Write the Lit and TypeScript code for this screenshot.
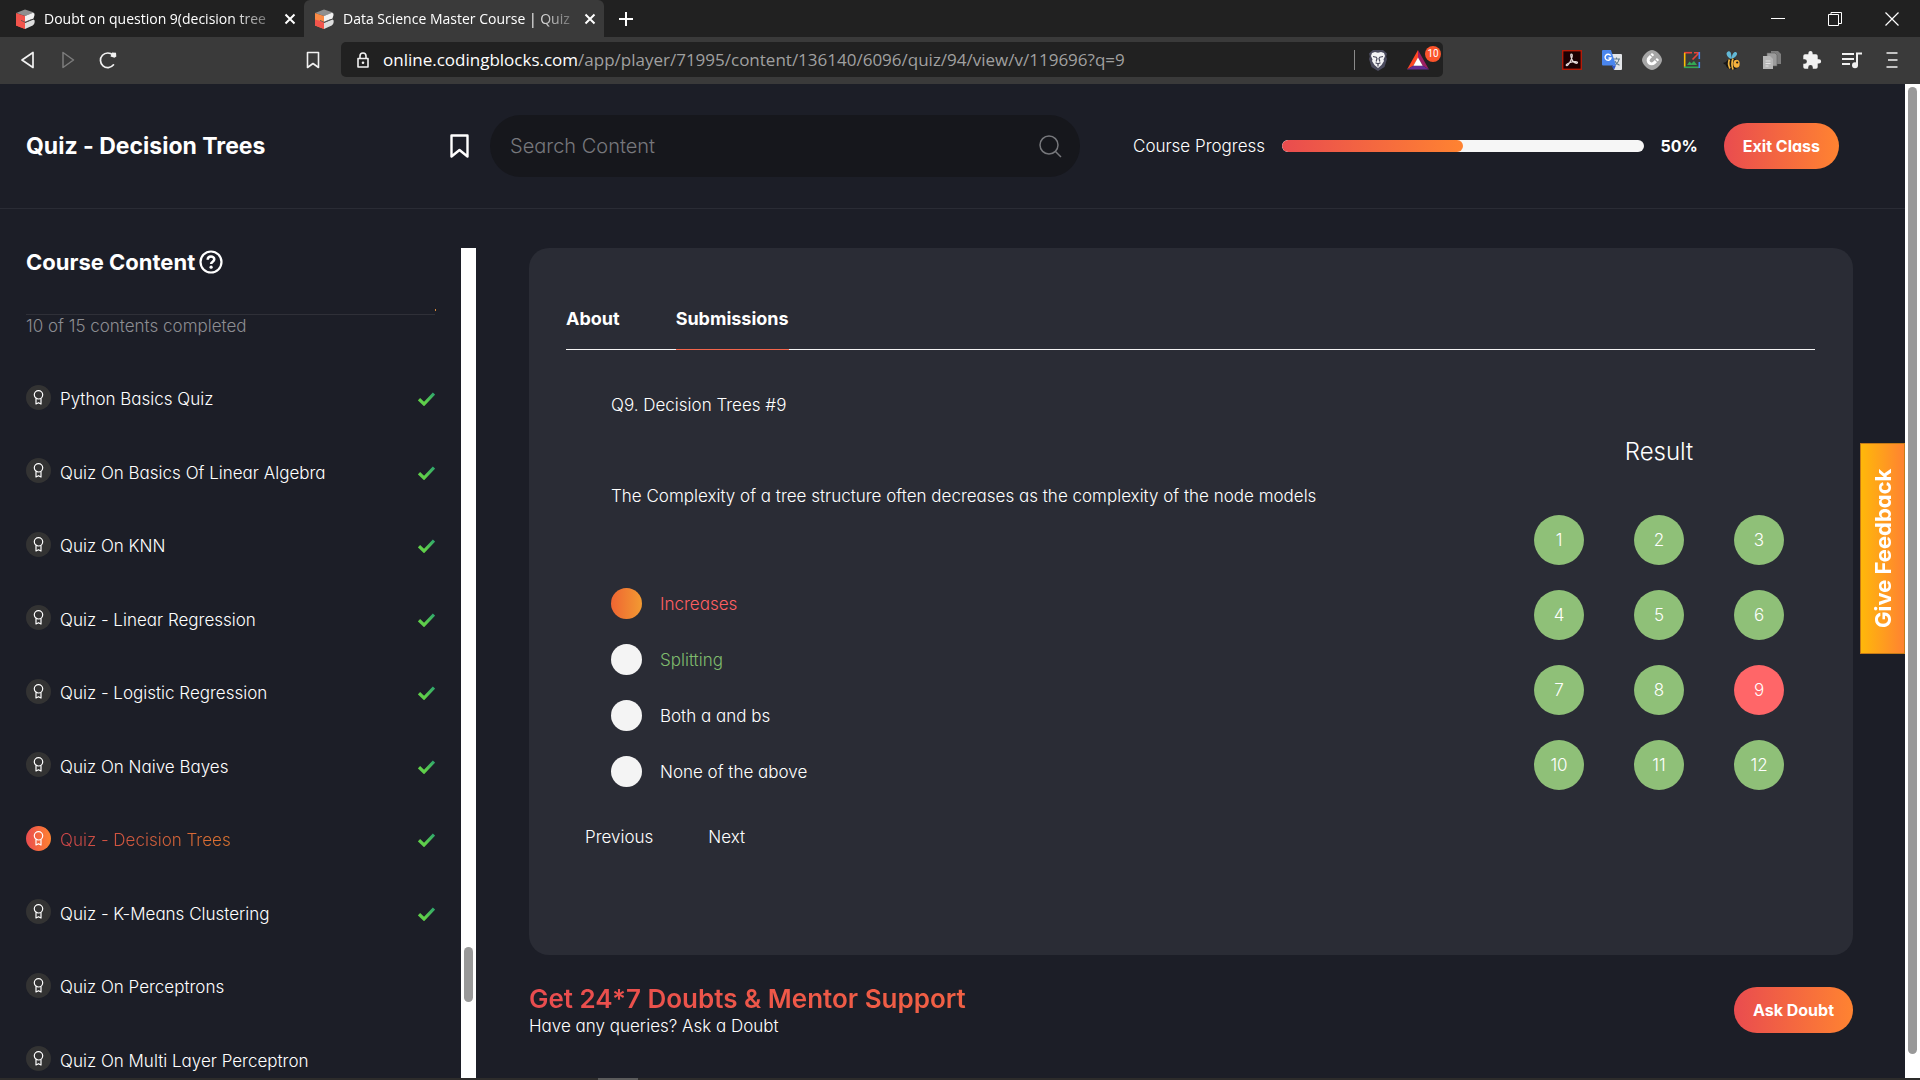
import { LitElement, html, css, svg, nothing } from "lit";
import { customElement, state } from "lit/decorators.js";
import { classMap } from "lit/directives/class-map.js";

interface Lesson {
  title: string;
  done: boolean;
  active?: boolean;
}

const LESSONS: Lesson[] = [
  { title: "Python Basics Quiz", done: true },
  { title: "Quiz On Basics Of Linear Algebra", done: true },
  { title: "Quiz On KNN", done: true },
  { title: "Quiz - Linear Regression", done: true },
  { title: "Quiz - Logistic Regression", done: true },
  { title: "Quiz On Naive Bayes", done: true },
  { title: "Quiz - Decision Trees", done: true, active: true },
  { title: "Quiz - K-Means Clustering", done: true },
  { title: "Quiz On Perceptrons", done: false },
  { title: "Quiz On Multi Layer Perceptron", done: false },
];

const OPTIONS = [
  { text: "Increases", tone: "wrong" },
  { text: "Splitting", tone: "right" },
  { text: "Both a and bs", tone: "" },
  { text: "None of the above", tone: "" },
];

const blocksLogo = (front: string) => html`<svg width="22" height="22" viewBox="0 0 22 22" aria-hidden="true">
  <path d="M2 5 11 1.5 20 4.5 11 8z" fill="#8f8f8f" />
  <path d="M2 5 11 8v13L2 17.5z" fill=${front} />
  <path d="M2 11.5 11 14v7L2 17.5z" fill="#f2544c" />
  <path d="M11 8l8-3.3q2 .3 1.5 2.6L19.500 10.500 11 14z" fill="#f1f1f1" />
  <path d="M11 15l8.500-3.600q1.500.4 1.200 2.600-.2 2.500-2 3.400L11 21z" fill="#dcdcdc" />
  <path d="M7 12.300 11 14.300 18 11.300" fill="none" stroke="#555" stroke-width="0.800" />
</svg>`;

const closeIcon = html`<svg width="12" height="12" viewBox="0 0 12 12" aria-hidden="true">
  <path d="M1.500 1.500l9 9m0-9l-9 9" stroke="#fff" stroke-width="2" />
</svg>`;

@customElement("browser-chrome")
export class BrowserChrome extends LitElement {
  static styles = css`
    :host {
      display: block;
      font-family: "Open Sans", "Noto Sans", sans-serif;
      font-weight: 400;
      color: #fff;
      background: #3a3a3a;
    }
    button {
      border: 0;
      padding: 0;
      margin: 0;
      background: none;
      color: inherit;
      font: inherit;
      display: flex;
      align-items: center;
      justify-content: center;
    }
    svg {
      display: block;
      flex: none;
    }
    .tabs {
      display: flex;
      align-items: stretch;
      height: 37px;
      background: #212121;
    }
    .tab {
      display: flex;
      align-items: center;
      width: 304px;
      gap: 8px;
      padding: 0 4px 0 14px;
      box-sizing: border-box;
      font-size: 14px;
      line-height: 20px;
    }
    .tab.on {
      width: 300px;
      padding: 0 4px 0 9px;
      background: #3a3a3a;
      border-radius: 6px 6px 0 0;
    }
    .label {
      flex: 1;
      min-width: 0;
      white-space: nowrap;
      mask-image: linear-gradient(90deg, #000 calc(100% - 40px), #0004);
    }
    .tab button {
      width: 20px;
      height: 20px;
    }
    .plus {
      width: 44px;
    }
    .window {
      display: flex;
      margin-left: auto;
    }
    .window button {
      width: 57px;
    }
    .bar {
      display: flex;
      align-items: center;
      height: 47px;
      padding: 0 18px 2px 0;
      box-sizing: border-box;
    }
    .nav {
      display: flex;
      align-items: center;
      gap: 20px;
      width: 341px;
      padding: 0 18px;
      box-sizing: border-box;
    }
    .save {
      margin-left: auto;
    }
    .address {
      display: flex;
      align-items: center;
      flex: 1;
      min-width: 0;
      height: 35px;
      padding: 0 2px 0 14px;
      box-sizing: border-box;
      border-radius: 5px;
      background: #212121;
      font-size: 17px;
      line-height: 24px;
      gap: 12px;
    }
    .url {
      flex: 1;
      min-width: 0;
      overflow: hidden;
      white-space: nowrap;
      color: #a0a0a0;
    }
    .host {
      color: #fff;
    }
    .rule {
      width: 1px;
      height: 20px;
      background: #8a8a8a;
    }
    .rewards {
      position: relative;
      width: 40px;
      justify-content: flex-start;
      padding-left: 6px;
      box-sizing: border-box;
    }
    .badge {
      position: absolute;
      top: -4px;
      right: 0;
      width: 16px;
      height: 16px;
      border-radius: 8px;
      background: #fb542b;
      font-family: Roboto, sans-serif;
      font-size: 10px;
      line-height: 16px;
      text-align: center;
    }
    .extensions {
      display: flex;
      gap: 20px;
      margin-left: 119px;
    }
  `;

  private extensionIcons() {
    return [
      ["PDF tools", svg`<rect x="0.700" y="0.700" width="18.600" height="18.600" fill="#1b0002" stroke="#b51b08" stroke-width="1.400"/><path d="M9.300 4c1.800 0 .8 3.800-.4 6.300S6 15.700 4.800 15.700s-.6-1.900 2.700-3 8-1.500 8-.1-3 .6-4.600-1.500S8 4 9.300 4z" fill="none" stroke="#e6d9d9" stroke-width="1.200"/>`],
      ["Translate", svg`<path d="M8 4h11a1 1 0 0 1 1 1v14a1 1 0 0 1-1 1h-7z" fill="#e3e5e8"/><path d="M11 9h7M14.500 7.500V9M17 9c-.5 3-2 5-4.500 6M12.800 11c1 2 2.500 3.400 4.700 4.300" fill="none" stroke="#607988" stroke-width="1.100"/><path d="M1 0h8l5 15.500H1a1 1 0 0 1-1-1V1a1 1 0 0 1 1-1z" fill="#4a86ee"/><path d="M9.500 15.500H14L12 20z" fill="#2f56c8"/><path d="M8.600 5.600A3 3 0 1 0 9 8H6.500" fill="none" stroke="#fff" stroke-width="1.400"/>`],
      ["Clipper", svg`<path d="M10 0c4 0 10 6 10 10s-6 10-10 10S0 14 0 10 6 0 10 0z" fill="#a6a6a6"/><g transform="rotate(45 10 10)"><path d="M6.500 5v5.500a3.500 3.500 0 0 0 7 0V5" fill="none" stroke="#fff" stroke-width="3"/><path d="M4.500 7.500h4m3 0h4" stroke="#a6a6a6"/></g>`],
      ["Image search", svg`<path d="M10 2.700H2" stroke="#ea4335" stroke-width="1.600"/><path d="M2.700 3v14.500" stroke="#fbbc05" stroke-width="1.600"/><path d="M2 17.300h15.300" stroke="#34a853" stroke-width="1.600"/><path d="M17.300 18v-6" stroke="#4285f4" stroke-width="1.600"/><path d="M10.500 9.500 17 3M12 2.700h5" fill="none" stroke="#ea4335" stroke-width="1.600"/><path d="M17.300 2v7" stroke="#4285f4" stroke-width="1.600"/><path d="M5 15l2.500-3.500 2 2L12 11l3 4z" fill="#34a853"/>`],
      ["Bee", svg`<path d="M9 9C5 7 3 3 6 1.500S9.500 5 9.500 8.500C10 4 12.500 1 14.500 2.500S13 8 9.500 9z" fill="#62b8d6"/><ellipse cx="10.500" cy="14" rx="7" ry="5.500" fill="#161616"/><path d="M7.500 9.500Q5.500 13.500 8 18.500M11 8.600Q9 13.500 11 19.500" fill="none" stroke="#f0b440" stroke-width="1.700"/><ellipse cx="14.500" cy="13.700" rx="3.200" ry="4" fill="#f6b23c"/><circle cx="15.200" cy="12.500" r="1.100" fill="#161616"/><path d="M4 12l-3 1 2.500 2z" fill="#161616"/>`],
      ["Copy pages", svg`<path d="M9 1h7l3 3v10H9z" fill="#7e7e7e"/><path d="M5 3h8l2 2v11H5z" fill="#9c9c9c" stroke="#5f5f5f" stroke-width="0.600"/><path d="M1 6h7l3 3v10H1z" fill="#b5b5b5"/><path d="M3.500 11h5m-5 2.500h5M3.500 16h3" stroke="#e2e2e2"/>`],
      ["Extensions", svg`<path d="M17 9.300h-1.300V6a1.700 1.700 0 0 0-1.700-1.700h-3.400V3a2.100 2.100 0 0 0-4.200 0v1.300H3A1.700 1.700 0 0 0 1.300 6v3.200h1.300a2.300 2.300 0 0 1 0 4.600H1.300V17A1.700 1.700 0 0 0 3 18.700h3.200v-1.300a2.300 2.300 0 0 1 4.600 0v1.300H14a1.700 1.700 0 0 0 1.700-1.700v-3.400H17a2.100 2.100 0 0 0 0-4.300z" fill="#f1f1f1"/>`],
      ["Media", svg`<path d="M0 4h12M0 9h12M0 14h8" stroke="#f1f1f1" stroke-width="2"/><path d="M15 15V3.500h5" fill="none" stroke="#f1f1f1" stroke-width="2"/><circle cx="13" cy="15.200" r="3" fill="#f1f1f1"/>`],
      ["Menu", svg`<path d="M4.500 3h11M6 10h9.500M4.500 17h11" stroke="#f1f1f1" stroke-width="1.700"/>`],
    ] as const;
  }

  render() {
    return html`
      <div class="tabs">
        <div class="tab">
          ${blocksLogo("#f2544c")}
          <span class="label">Doubt on question 9(decision tree</span>
          <button aria-label="Close tab">${closeIcon}</button>
        </div>
        <div class="tab on">
          ${blocksLogo("#fb8a45")}
          <span class="label">Data Science Master Course | Quiz</span>
          <button aria-label="Close tab">${closeIcon}</button>
        </div>
        <button class="plus" aria-label="New tab">
          <svg width="16" height="16" viewBox="0 0 16 16"><path d="M8 1v14M1 8h14" stroke="#fff" stroke-width="2" /></svg>
        </button>
        <div class="window">
          <button aria-label="Minimize"><svg width="14" height="14" viewBox="0 0 14 14"><path d="M0 6.500h14" stroke="#fff" /></svg></button>
          <button aria-label="Restore"><svg width="14" height="14" viewBox="0 0 14 14"><path d="M.5 2.500h10v11h-10zM3 2.500v-2h10.500v11H11" fill="none" stroke="#fff" /></svg></button>
          <button aria-label="Close window"><svg width="14" height="14" viewBox="0 0 14 14"><path d="M.5.5l13 13m0-13l-13 13" stroke="#fff" stroke-width="1.200" /></svg></button>
        </div>
      </div>
      <div class="bar">
        <div class="nav">
          <button aria-label="Back"><svg width="20" height="20" viewBox="0 0 20 20"><path d="M15 2.500v15L4 10z" fill="none" stroke="#f1f1f1" stroke-width="1.700" stroke-linejoin="round" /></svg></button>
          <button aria-label="Forward"><svg width="20" height="20" viewBox="0 0 20 20"><path d="M5 2.500v15L15.500 10z" fill="none" stroke="#7c7c7c" stroke-width="1.500" stroke-linejoin="round" /></svg></button>
          <button aria-label="Reload"><svg width="20" height="20" viewBox="0 0 20 20"><path d="M15.500 14.800A7.300 7.300 0 1 1 15 5.200" fill="none" stroke="#f1f1f1" stroke-width="1.700" stroke-linecap="round" /><path d="M12.500 6.500 14 2.500l4 .2.300 3.800-1.800 1.200z" fill="#f1f1f1" /></svg></button>
          <button class="save" aria-label="Bookmark"><svg width="20" height="20" viewBox="0 0 20 20"><path d="M4.500 2.500h11v15L10 13.500l-5.500 4z" fill="none" stroke="#f1f1f1" stroke-width="1.600" stroke-linejoin="round" /></svg></button>
        </div>
        <div class="address">
          <svg width="16" height="18" viewBox="0 0 16 18" aria-hidden="true"><path d="M3 7.500h10v8.500H3zM5 7.500V5a3 3 0 0 1 6 0v2.500" fill="none" stroke="#f1f1f1" stroke-width="1.600" stroke-linejoin="round" /><circle cx="8" cy="11.800" r="1.300" fill="#f1f1f1" /></svg>
          <span class="url"><span class="host">online.codingblocks.com</span>/app/player/71995/content/136140/6096/quiz/94/view/v/119696?q=9</span>
          <span class="rule"></span>
          <button aria-label="Shields">
            <svg width="22" height="22" viewBox="0 0 22 22"><path d="M6 1h10l4 3.500-.8 3L20 10l-2.500 8L11 22l-6.500-4L2 10l.8-2.500L2 4.500z" fill="#4b4b5e" /><path d="M5 4l3-1 3 .8 3-.8 3 1 1 3-1.500 3.500.5 1.500-2.500 4L11 19l-3.500-3L5 12l.5-1.500L4 7z" fill="#f4f4f6" /><path d="M6 7.500l3.200.7.8 1.300-.8 3M16 7.500l-3.200.7-.8 1.300.8 3M8.500 13.800l2.500 1 2.500-1M11 15v2.500" fill="none" stroke="#4b4b5e" stroke-width="1.200" /></svg>
          </button>
          <button class="rewards" aria-label="Rewards">
            <svg width="22" height="20" viewBox="0 0 22 20"><path d="M11 0 0 19.500l6.500-4L11 8z" fill="#ff4724" /><path d="M11 0v8l4.500 7.500 6.500 4z" fill="#9e1f63" /><path d="M0 19.500h22l-6.500-4h-9z" fill="#662d91" /><path d="M11 7.500 6.300 15.700h9.400z" fill="#fff" /></svg>
            <span class="badge">10</span>
          </button>
        </div>
        <div class="extensions">
          ${this.extensionIcons().map(
            ([name, art]) => html`<button aria-label=${name}><svg width="20" height="20" viewBox="0 0 20 20" fill="none">${art}</svg></button>`
          )}
        </div>
      </div>
    `;
  }
}

@customElement("course-sidebar")
export class CourseSidebar extends LitElement {
  static styles = css`
    :host {
      display: flex;
      flex: none;
      width: 476px;
      min-height: 0;
    }
    .panel {
      flex: 1;
      min-width: 0;
      padding: 0 26px;
      overflow: hidden;
    }
    .head {
      display: flex;
      align-items: center;
      gap: 4px;
      margin: 0;
      font-size: 22px;
      line-height: 28px;
      font-weight: 700;
    }
    .count {
      position: relative;
      margin: 38px 0 25px;
      border-top: 1px solid #2f3038;
      color: #8c8d92;
      font-weight: 300;
      font-size: 17px;
      line-height: 22px;
    }
    .count::after {
      content: "";
      position: absolute;
      right: -1px;
      top: -6px;
      width: 1px;
      height: 2px;
      background: #d98a3a;
    }
    ul {
      list-style: none;
      margin: 0;
      padding: 0;
    }
    li {
      display: flex;
      align-items: center;
      justify-content: space-between;
      height: 73px;
    }
    li:nth-child(odd) {
      height: 74px;
    }
    a {
      display: flex;
      align-items: center;
      gap: 9px;
      color: #fff;
      text-decoration: none;
      font-size: 17px;
      line-height: 24px;
    }
    .medal {
      display: block;
      width: 25px;
      height: 25px;
      margin-bottom: 4px;
      border-radius: 50%;
      background: #333;
    }
    .active .medal {
      background: linear-gradient(90deg, #e94c4f, #ff8331);
    }
    .active .name {
      background: linear-gradient(90deg, #e94c4f, #ff8331);
      background-clip: text;
      color: transparent;
      opacity: 0.85;
    }
    .track {
      width: 15px;
      box-sizing: border-box;
      padding: 0 3px;
      background: #fff;
      display: flex;
      flex-direction: column;
    }
    .track::before {
      content: "";
      flex: 699;
    }
    .track::after {
      content: "";
      flex: 76;
    }
    .thumb {
      flex: 55;
      border-radius: 5px;
      background: #999;
    }
  `;

  render() {
    return html`
      <div class="panel">
        <h2 class="head">
          Course Content
          <svg width="24" height="24" viewBox="0 0 24 24" role="img" aria-label="Help">
            <circle cx="12" cy="12" r="10.500" fill="none" stroke="#fff" stroke-width="2.200" />
            <path d="M8.700 9.700c0-4.200 6.600-4 6.600-.4 0 2.400-3.200 2.300-3.200 4.700" fill="none" stroke="#fff" stroke-width="2.500" />
            <circle cx="12.100" cy="17.200" r="1.600" fill="#fff" />
          </svg>
        </h2>
        <p class="count">10 of 15 contents completed</p>
        <ul>
          ${LESSONS.map(
            (l) => html`<li class=${classMap({ active: !!l.active })}>
              <a href="#">
                <svg class="medal" viewBox="0 0 25 25" aria-hidden="true">
                  <g fill="none" stroke="#fff" stroke-width="1.200" stroke-linejoin="round">
                    <circle cx="12.500" cy="9.800" r="4.200" />
                    <path d="M10 13.500v5.500l2.500-1.300 2.500 1.300v-5.500" />
                  </g>
                </svg>
                <span class="name">${l.title}</span>
              </a>
              ${l.done
                ? html`<svg width="17" height="14" viewBox="0 0 17 14" role="img" aria-label="Completed">
                    <defs><linearGradient id="g" x1="0" y1="1" x2="1" y2="0"><stop offset="0.300" stop-color="#5fcf4a" /><stop offset="1" stop-color="#2ea66d" /></linearGradient></defs>
                    <path d="M1 7.200l5 4.800L16 1.500" fill="none" stroke="url(#g)" stroke-width="3.200" />
                  </svg>`
                : nothing}
            </li>`
          )}
        </ul>
      </div>
      <div class="track"><div class="thumb"></div></div>
    `;
  }
}

@customElement("quiz-card")
export class QuizCard extends LitElement {
  @state() private chosen = 0;

  static styles = css`
    :host {
      display: block;
      padding: 40px 38px 106px 37px;
      border-radius: 20px;
      background: #2a2c35;
      font-size: 17px;
      line-height: 24px;
    }
    button {
      margin: 0;
      padding: 0;
      border: 0;
      background: none;
      color: inherit;
      font: inherit;
      font-feature-settings: inherit;
    }
    .tabs {
      display: flex;
      gap: 56px;
      border-bottom: 1px solid #f4f4f4;
    }
    .tab {
      padding: 19px 0 18px;
      margin-bottom: -1px;
      border-bottom: 1px solid transparent;
      font-weight: 700;
      font-size: 18px;
      line-height: 24px;
    }
    .tab.on {
      border-bottom-color: #f2654b;
    }
    .body {
      display: flex;
      justify-content: space-between;
      padding: 0 31px 0 45px;
    }
    .title {
      margin: 43px 0 67px;
      font-size: 17px;
      font-weight: inherit;
    }
    .text {
      margin: 0 0 80px;
    }
    fieldset {
      display: flex;
      flex-direction: column;
      gap: 25px;
      margin: 0;
      padding: 0;
      border: 0;
    }
    .option {
      display: flex;
      align-items: center;
      gap: 18px;
    }
    .option input {
      appearance: none;
      width: 31px;
      height: 31px;
      margin: 0;
      border-radius: 50%;
      background: #f4f4f4;
    }
    .option input:checked {
      background: linear-gradient(90deg, #ef6532, #f29a32);
    }
    .wrong {
      color: #ff5f62;
    }
    .right {
      color: #7fbb6d;
    }
    .steps {
      display: flex;
      gap: 55px;
      margin-top: 35px;
      padding-left: 19px;
    }
    .result h3 {
      margin: 87px 0 48px;
      font-size: 24px;
      line-height: 30px;
      font-weight: inherit;
      text-align: center;
    }
    .grid {
      display: grid;
      grid-template-columns: repeat(3, 50px);
      gap: 25px 50px;
    }
    .grid button {
      height: 50px;
      border-radius: 50%;
      background: #8fc078;
    }
    .grid .miss {
      background: #ff6668;
    }
  `;

  render() {
    return html`
      <div class="tabs">
        <button class="tab">About</button>
        <button class="tab on">Submissions</button>
      </div>
      <div class="body">
        <div>
          <h2 class="title">Q9. Decision Trees #9</h2>
          <p class="text">The Complexity of a tree structure often decreases as the complexity of the node models</p>
          <fieldset aria-label="Answers">
            ${OPTIONS.map(
              (o, i) => html`<label class="option ${o.tone}">
                <input type="radio" name="answer" .checked=${i === this.chosen} @change=${() => (this.chosen = i)} />
                ${o.text}
              </label>`
            )}
          </fieldset>
        </div>
        <div class="result">
          <h3>Result</h3>
          <div class="grid">
            ${Array.from({ length: 12 }, (_, i) => html`<button class=${classMap({ miss: i === 8 })}>${i + 1}</button>`)}
          </div>
        </div>
      </div>
      <div class="steps"><button>Previous</button><button>Next</button></div>
    `;
  }
}

@customElement("app-root")
export class AppRoot extends LitElement {
  @state() private progress = 50;

  static styles = css`
    :host {
      display: flex;
      flex-direction: column;
      height: 100vh;
      overflow: hidden;
      background: #1c1e27;
      color: #fff;
      font-family: Inter, Lato, sans-serif;
      font-feature-settings: "cv11", "calt" 0;
      font-weight: 300;
    }
    .page {
      display: flex;
      flex: 1;
      min-height: 0;
    }
    .view {
      position: relative;
      display: flex;
      flex-direction: column;
      flex: 1;
      min-width: 0;
    }
    header {
      display: flex;
      align-items: center;
      padding: 0 66px 0 26px;
      height: 124px;
      border-bottom: 1px solid #2a2c35;
    }
    .lead {
      display: flex;
      align-items: center;
      justify-content: space-between;
      width: 443px;
      flex: none;
    }
    h1 {
      margin: 0;
      font-size: 23px;
      line-height: 30px;
      font-weight: 700;
    }
    .icon {
      display: block;
      padding: 0;
      border: 0;
      background: none;
    }
    .icon svg,
    .search svg {
      display: block;
    }
    .search {
      display: flex;
      align-items: center;
      flex: 552 1 0;
      height: 62px;
      margin: 0 53px 0 21px;
      padding: 0 18px 0 20px;
      box-sizing: border-box;
      border-radius: 31px;
      background: #16171c;
    }
    .search input {
      flex: 1;
      min-width: 0;
      border: 0;
      padding: 0;
      outline: 0;
      background: none;
      color: #fff;
      font: inherit;
      font-feature-settings: inherit;
      font-size: 20px;
      line-height: 24px;
    }
    .search input::placeholder {
      color: #77787c;
      opacity: 1;
    }
    .progress {
      display: flex;
      align-items: center;
      flex: 706 1 0;
      font-size: 17px;
      line-height: 24px;
    }
    .meter {
      flex: 1;
      height: 12px;
      margin: 0 17px;
      border-radius: 6px;
      overflow: hidden;
      background: #f6f6f6;
    }
    .fill {
      height: 100%;
      border-radius: 6px;
      background: linear-gradient(90deg, #e94c4f, #ff8331);
    }
    .percent {
      margin-right: 26px;
      font-size: 16px;
      font-weight: 700;
    }
    .pill {
      height: 46px;
      padding: 0 19px;
      border: 0;
      border-radius: 23px;
      background: linear-gradient(90deg, #e94c4f, #ff8331);
      color: #fff;
      font: inherit;
      font-feature-settings: inherit;
      font-size: 16px;
      line-height: 24px;
      font-weight: 700;
    }
    .columns {
      display: flex;
      flex: 1;
      min-height: 0;
      padding-top: 39px;
    }
    main {
      flex: 1;
      min-width: 0;
      padding: 0 52px 0 53px;
    }
    .support {
      display: flex;
      align-items: center;
      justify-content: space-between;
      gap: 24px;
      margin-top: 28px;
    }
    .support > div {
      flex: 1;
    }
    .support h2 {
      margin: 0;
      font-size: 26px;
      line-height: 32px;
      font-weight: 600;
      background: linear-gradient(90deg, #e94c4f, #ff8331);
      background-clip: text;
      color: transparent;
    }
    .support p {
      margin: 0;
      font-size: 17px;
      line-height: 22px;
    }
    .feedback {
      position: absolute;
      right: 0;
      top: 359px;
      width: 45px;
      height: 211px;
      padding: 0;
      border: 1px solid #c57a18;
      background: linear-gradient(270deg, #ffb80a, #ff8331);
      color: #fff;
      font: inherit;
      font-feature-settings: inherit;
      font-size: 22px;
      font-weight: 700;
      line-height: 26px;
      writing-mode: vertical-rl;
      transform: rotate(180deg);
    }
    .track {
      display: flex;
      flex-direction: column;
      width: 15px;
      padding: 3px;
      box-sizing: border-box;
      background: #fff;
    }
    .thumb {
      flex: 967;
      border-radius: 5px;
      background: #999;
    }
    .track::after {
      content: "";
      flex: 21;
    }
    .taskbar {
      display: flex;
      flex: none;
      height: 2px;
      padding-left: 598px;
      background: #2d2c2b;
    }
    .task {
      width: 40px;
      background: #5b5b5b;
    }
  `;

  render() {
    return html`
      <browser-chrome></browser-chrome>
      <div class="page">
        <div class="view">
          <header>
            <div class="lead">
              <h1>Quiz - Decision Trees</h1>
              <button class="icon" aria-label="Bookmark this quiz">
                <svg width="19" height="25" viewBox="0 0 19 25"><path d="M1.500 1.500h16v21L9.500 16l-8 6.500z" fill="none" stroke="#fff" stroke-width="2.400" stroke-linejoin="round" /></svg>
              </button>
            </div>
            <label class="search">
              <input type="search" aria-label="Search Content" placeholder="Search Content" />
              <svg width="24" height="24" viewBox="0 0 24 24" aria-hidden="true"><circle cx="11" cy="11" r="9" fill="none" stroke="#77787c" stroke-width="1.500" /><path d="M17.500 17.500 23 23" stroke="#77787c" stroke-width="1.500" /></svg>
            </label>
            <div class="progress">
              <span>Course Progress</span>
              <div class="meter" role="progressbar" aria-label="Course Progress" aria-valuenow=${this.progress}>
                <div class="fill" style="width:${this.progress}%"></div>
              </div>
              <span class="percent">${this.progress}%</span>
              <button class="pill">Exit Class</button>
            </div>
          </header>
          <div class="columns">
            <course-sidebar></course-sidebar>
            <main>
              <quiz-card></quiz-card>
              <section class="support">
                <div>
                  <h2>Get 24*7 Doubts &amp; Mentor Support</h2>
                  <p>Have any queries? Ask a Doubt</p>
                </div>
                <button class="pill">Ask Doubt</button>
              </section>
            </main>
          </div>
          <button class="feedback">Give Feedback</button>
        </div>
        <div class="track"><div class="thumb"></div></div>
      </div>
      <div class="taskbar"><span class="task"></span></div>
    `;
  }
}
